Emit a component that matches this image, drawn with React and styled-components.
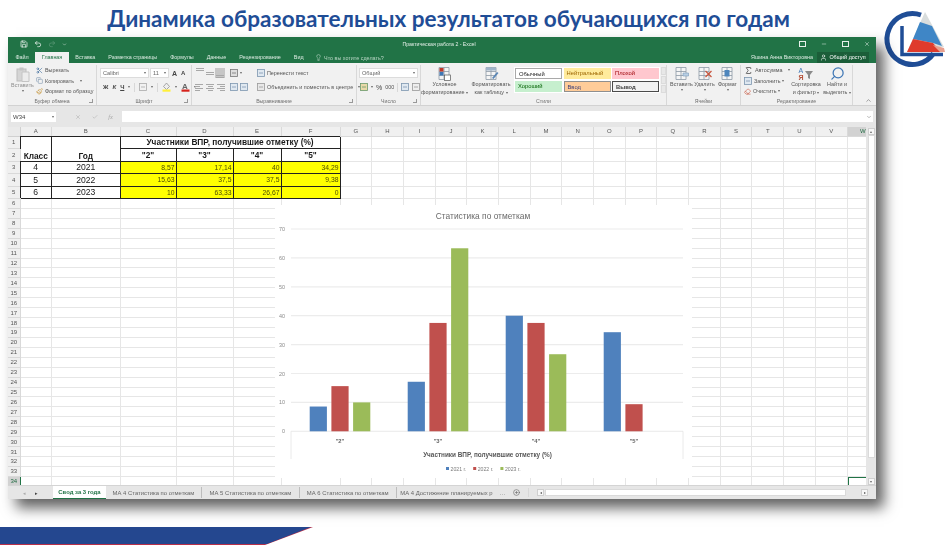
import React from 'react';
import styled, { createGlobalStyle } from 'styled-components';
import { Save, Undo2, Redo2, Scissors, Copy, Paintbrush, Lightbulb, X, Minus, User, Search, Sigma, Eraser, ChevronDown, ChevronUp, Check, CirclePlus } from 'lucide-react';

const sans = `'Liberation Sans', Arial, sans-serif`;

const GlobalStyle = createGlobalStyle`
  html, body { margin: 0; padding: 0; background: #fff; }
  body { font-family: ${sans}; }
`;

const Page = styled.div`
  position: relative;
  width: 950px;
  height: 545px;
  overflow: hidden;
  display: flex;
  flex-direction: column;
  background: #fff;
`;

const Title = styled.h1`
  margin: 0;
  height: 37px;
  width: 897px;
  text-align: center;
  font-family: Lato, 'Open Sans', sans-serif;
  font-size: 22.55px;
  line-height: 38px;
  font-weight: 700;
  color: #1f4d96;
  white-space: nowrap;
`;

const Logo = styled.svg`
  position: absolute;
  left: 875px;
  top: 4px;
  width: 75px;
  height: 75px;
`;

const Band = styled.div`
  margin-top: auto;
  width: 313px;
  height: 18px;
  background: #b8304a;
  clip-path: polygon(0 0, 100% 0, 265px 100%, 0 100%);
  &::before {
    content: '';
    display: block;
    height: 17px;
    background: #24478f;
    clip-path: polygon(0 0, 311px 0, 267px 100%, 0 100%);
  }
`;

const Window = styled.div`
  margin-left: 8px;
  width: 868px;
  height: 462px;
  display: flex;
  flex-direction: column;
  background: #f1f1f1;
  box-shadow: 8px 9px 13px rgba(0, 0, 0, 0.62);
  filter: blur(0.3px);
`;

/* title bar */
const TitleBar = styled.div`
  height: 14px;
  background: #217346;
  color: #e4efe8;
  display: grid;
  grid-template-columns: 1fr auto 1fr;
  align-items: center;
  padding: 0 12px 0 6px;
  font-size: 5.2px;
`;

const QuickAccess = styled.div`
  display: flex;
  align-items: center;
  gap: 6px;
  margin-left: 6px;
  color: #fff;
`;

const WinControls = styled.div`
  display: flex;
  justify-content: flex-end;
  align-items: center;
  gap: 15px;
  margin-right: -6px;
  color: #e6f0ea;
`;

const TinyRect = styled.span`
  display: block;
  width: 5px;
  height: 4px;
  border: 1px solid #e6f0ea;
`;

/* tab row */
const TabRow = styled.div`
  height: 12px;
  background: #217346;
  display: flex;
  align-items: flex-end;
  padding-left: 1px;
  font-size: 5.4px;
  color: #dcebe2;
`;

const Tab = styled.div`
  height: 11px;
  line-height: 11px;
  padding: 0 6.5px;
  background: ${(p) => (p.$active ? '#f1f1f1' : 'transparent')};
  color: ${(p) => (p.$active ? '#217346' : '#dcebe2')};
  white-space: nowrap;
`;

const TellMe = styled.div`
  height: 11px;
  display: flex;
  align-items: center;
  gap: 2px;
  margin-left: 5px;
  color: #b9d6c5;
`;

const UserArea = styled.div`
  margin-left: auto;
  height: 12px;
  display: flex;
  align-items: center;
  gap: 4px;
  padding-right: 7px;
`;

const ShareButton = styled.div`
  height: 11px;
  width: 52px;
  display: flex;
  align-items: center;
  justify-content: center;
  gap: 2px;
  background: #1b5e39;
  color: #fff;
`;

/* ribbon */
const Ribbon = styled.div`
  height: 43px;
  display: flex;
  background: #f1f1f1;
  border-bottom: 1px solid #d2d2d2;
  box-sizing: border-box;
  color: #555;
  font-size: 5.4px;
`;

const Group = styled.div`
  width: ${(p) => p.$w}px;
  flex: none;
  display: flex;
  flex-direction: column;
  margin: 2px 0 0;
  border-right: 1px solid #d8d8d8;
  box-sizing: border-box;
`;

const GroupBody = styled.div`
  flex: 1;
  min-height: 0;
  display: flex;
  gap: ${(p) => p.$gap || 0}px;
  padding: ${(p) => p.$pad || '0 2px'};
`;

const GroupLabel = styled.div`
  position: relative;
  height: 8px;
  line-height: 8px;
  text-align: center;
  font-size: 5.2px;
  color: #6f6f6f;
  &::after {
    content: '';
    display: ${(p) => (p.$launcher ? 'block' : 'none')};
    position: absolute;
    right: 3px;
    top: 2px;
    width: 3px;
    height: 3px;
    border: 1px solid #999;
    border-width: 0 1px 1px 0;
  }
`;

const Column = styled.div`
  display: flex;
  flex-direction: column;
  flex: none;
  width: ${(p) => (p.$w ? `${p.$w}px` : 'auto')};
  gap: ${(p) => p.$gap || 0}px;
`;

const Row = styled.div`
  display: flex;
  align-items: center;
  gap: ${(p) => p.$gap ?? 2}px;
  height: ${(p) => p.$h || 10}px;
  white-space: nowrap;
`;

const BigButton = styled.div`
  width: ${(p) => p.$w}px;
  flex: none;
  display: flex;
  flex-direction: column;
  align-items: center;
  line-height: 7.5px;
  text-align: center;
  white-space: nowrap;
  color: ${(p) => (p.$dim ? '#8d8d8d' : '#555')};
  svg { flex: none; }
`;

const Combo = styled.div`
  width: ${(p) => p.$w}px;
  height: 10px;
  box-sizing: border-box;
  background: #fff;
  border: 1px solid #dcdcdc;
  display: flex;
  align-items: center;
  justify-content: space-between;
  padding: 0 2px;
  font-size: 5.6px;
  color: #666;
  flex: none;
`;

const Caret = styled.span`
  display: inline-block;
  width: 0;
  height: 0;
  flex: none;
  border-left: 1.5px solid transparent;
  border-right: 1.5px solid transparent;
  border-top: 2px solid #666;
`;

const Letter = styled.span`
  font-family: ${(p) => (p.$serif ? `'Liberation Serif', serif` : sans)};
  font-weight: 700;
  font-size: ${(p) => p.$size || 7}px;
  font-style: ${(p) => (p.$italic ? 'italic' : 'normal')};
  text-decoration: ${(p) => (p.$under ? 'underline' : 'none')};
  color: ${(p) => p.$color || '#444'};
`;

const Divider = styled.span`
  display: block;
  width: 1px;
  height: 9px;
  background: #d8d8d8;
  flex: none;
`;

const AlignCell = styled.span`
  display: flex;
  flex-direction: column;
  justify-content: center;
  gap: 1px;
  width: 10px;
  height: 10px;
  background: ${(p) => (p.$on ? '#c6c6c6' : 'transparent')};
  align-items: ${(p) => p.$align || 'center'};
  flex: none;
  i {
    display: block;
    height: 1px;
    background: #a8a8a8;
  }
`;

const StyleGrid = styled.div`
  display: grid;
  grid-template-columns: repeat(3, 47px);
  grid-auto-rows: 11px;
  gap: 2px 1.5px;
  margin: 1px 0 0 0;
  background: #fff;
  padding: 1px;
  align-self: flex-start;
`;

const StyleCell = styled.div`
  background: ${(p) => p.$bg};
  color: ${(p) => p.$fg};
  border: ${(p) => p.$border || 'none'};
  box-sizing: border-box;
  font-size: 5.8px;
  font-weight: ${(p) => (p.$bold ? 700 : 400)};
  line-height: 10px;
  padding-left: 3px;
`;

const GalleryScroll = styled.div`
  width: 6px;
  margin: 1px 0 0 1px;
  height: 26px;
  display: grid;
  grid-template-rows: 1fr 1fr 1fr;
  gap: 1px;
  span { background: #e8e8e8; border: 1px solid #dcdcdc; box-sizing: border-box; }
`;

const Collapse = styled.div`
  flex: 1;
  display: flex;
  align-items: flex-end;
  justify-content: flex-end;
  padding: 0 4px 1px 0;
  color: #666;
`;

/* formula bar */
const FormulaBar = styled.div`
  height: 21px;
  flex: none;
  background: #e6e6e6;
  display: flex;
  align-items: center;
  padding: 0 3px;
  gap: 2px;
`;

const NameBox = styled(Combo)`
  width: 45px;
  height: 10px;
  border: none;
  color: #444;
  font-size: 6px;
`;

const FormulaButtons = styled.div`
  width: 62px;
  height: 10px;
  display: flex;
  align-items: center;
  justify-content: space-between;
  padding: 0 7px 0 17px;
  box-sizing: border-box;
  color: #aaa;
  font-style: italic;
  font-family: 'Liberation Serif', serif;
  font-size: 6.5px;
`;

const FormulaInput = styled.div`
  flex: 1;
  height: 11px;
  background: #fff;
  display: flex;
  align-items: center;
  justify-content: flex-end;
  padding-right: 1px;
  color: #777;
`;

/* sheet */
const SheetArea = styled.div`
  height: 358px;
  flex: none;
  display: flex;
  background: #fff;
`;

const SheetGrid = styled.div`
  position: relative;
  flex: 1;
  min-width: 0;
  overflow: hidden;
  display: grid;
  grid-template-columns: 12.5px 31.5px 68.5px 56px 57px 48px 59px repeat(17, 31.7px);
  grid-template-rows: 9.5px repeat(5, 12.5px) repeat(29, 9.93px);
`;

const Corner = styled.div`
  background: #eaeaea;
  border-right: 1px solid #d0d0d0;
  border-bottom: 1px solid #d0d0d0;
  box-sizing: border-box;
`;

const HeaderCell = styled.div`
  background: ${(p) => (p.$sel ? '#d2d2d2' : '#f0f0f0')};
  color: ${(p) => (p.$sel ? '#1f6b41' : '#555')};
  font-size: 6px;
  display: flex;
  align-items: center;
  justify-content: center;
  box-sizing: border-box;
  border-right: ${(p) => (p.$rowSel ? '1px solid #217346' : '1px solid #d9d9d9')};
  border-bottom: 1px solid #d9d9d9;
`;

const Cell = styled.div`
  box-sizing: border-box;
  border-right: 1px solid ${(p) => (p.$boxed ? '#222' : '#e6e6e6')};
  border-bottom: 1px solid ${(p) => (p.$boxed ? '#222' : '#e6e6e6')};
  box-shadow: ${(p) => (p.$boxed ? '-1px -1px 0 #222' : 'none')};
  background: ${(p) => (p.$yellow ? '#ffff00' : '#fff')};
  grid-column: span ${(p) => p.$cols || 1};
  grid-row: span ${(p) => p.$rows || 1};
  display: flex;
  align-items: ${(p) => (p.$rows ? 'flex-end' : 'center')};
  justify-content: ${(p) => (p.$yellow ? 'flex-end' : 'center')};
  padding-right: ${(p) => (p.$yellow ? 1 : 0)}px;
  font-size: ${(p) => (p.$yellow ? 6.8 : p.$bold ? 8.3 : 8.6)}px;
  font-weight: ${(p) => (p.$bold ? 700 : 400)};
  color: ${(p) => (p.$yellow ? '#4d4d00' : '#1a1a1a')};
  white-space: nowrap;
`;

const SelectedCell = styled(Cell)`
  border: 0;
  border-top: 1px solid #217346;
  border-left: 1px solid #217346;
`;

const ChartBox = styled.div`
  position: absolute;
  left: 267px;
  top: 78px;
  width: 417px;
  height: 273px;
  background: #fff;
`;

const VScroll = styled.div`
  width: 10px;
  flex: none;
  background: #e6e6e6;
  display: flex;
  flex-direction: column;
  align-items: center;
  padding-top: 1px;
  box-sizing: border-box;
`;

const VThumb = styled.div`
  width: 7px;
  height: 323px;
  background: #fff;
  border: 1px solid #dadada;
  box-sizing: border-box;
`;

const ScrollButton = styled.div`
  width: 7px;
  height: 7px;
  background: #f7f7f7;
  border: 1px solid #cfcfcf;
  box-sizing: border-box;
  display: flex;
  align-items: center;
  justify-content: center;
  flex: none;
  font-size: 4px;
  color: #555;
  margin-top: ${(p) => (p.$bottom ? 'auto' : 0)};
`;

/* sheet tabs */
const SheetBar = styled.div`
  flex: 1;
  background: #e6e6e6;
  border-top: 1px solid #d4d4d4;
  display: flex;
  align-items: stretch;
  font-size: 5.9px;
  color: #666;
  min-height: 0;
`;

const SheetNav = styled.div`
  width: 45px;
  flex: none;
  display: flex;
  align-items: center;
  justify-content: flex-end;
  gap: 9px;
  padding-right: 15px;
  box-sizing: border-box;
  color: #444;
  font-size: 5px;
`;

const SheetTab = styled.div`
  width: ${(p) => p.$w}px;
  flex: none;
  box-sizing: border-box;
  overflow: hidden;
  text-align: center;
  line-height: 13px;
  white-space: nowrap;
  background: ${(p) => (p.$active ? '#fff' : 'transparent')};
  color: ${(p) => (p.$active ? '#217346' : '#666')};
  font-weight: ${(p) => (p.$active ? 700 : 400)};
  border-bottom: ${(p) => (p.$active ? '1px solid #217346' : 'none')};
  border-right: ${(p) => (p.$last || p.$active ? 'none' : '1px solid #bdbdbd')};
  margin: ${(p) => (p.$active ? 0 : '1px 0')};
`;

const HScrollArea = styled.div`
  flex: 1;
  display: flex;
  align-items: center;
  gap: 1px;
  margin-left: 2.5px;
  padding-right: 8px;
`;

const HThumb = styled.div`
  flex: 1;
  height: 7px;
  background: #fff;
  border: 1px solid #dadada;
  box-sizing: border-box;
  margin-right: 14px;
`;

const MoreTabs = styled.div`
  width: 38px;
  flex: none;
  display: flex;
  align-items: center;
  gap: 8px;
  padding-left: 3px;
  box-sizing: border-box;
  color: #666;
`;

// ---------- small drawings ----------

const PasteIcon = () => (
  <svg width="14" height="15" viewBox="0 0 14 15">
    <rect x="1" y="2" width="9" height="12" fill="#d5d5d5" stroke="#bdbdbd" />
    <rect x="3.5" y="0.5" width="4" height="3" fill="#c4c4c4" />
    <path d="M6 5h7v9.5H6z" fill="#ececec" stroke="#c4c4c4" />
  </svg>
);

const GridIcon = ({ accent, w = 15 }) => (
  <svg width={w} height="15" viewBox="0 0 15 15" preserveAspectRatio="xMinYMid meet">
    <path d="M2 1.5h10v12H2zM2 5.5h10M2 9.5h10M7 1.5v12" fill="#f5f5f5" stroke="#8d99a6" strokeWidth="0.8" />
    {accent}
  </svg>
);

const CondIcon = () => (
  <GridIcon
    accent={
      <>
        <rect x="2.5" y="2" width="4" height="3.5" fill="#c0392b" />
        <rect x="2.5" y="6" width="4" height="3.5" fill="#3f77b5" />
        <rect x="7.5" y="9" width="6" height="5.5" fill="#fff" stroke="#555" strokeWidth="0.7" />
      </>
    }
  />
);

const TableIcon = () => (
  <GridIcon
    accent={
      <>
        <rect x="2" y="1.5" width="10" height="3" fill="#9fb4c9" />
        <path d="M8 12l5-6 1.5 1-5 6z" fill="#5b86b5" />
      </>
    }
  />
);

const InsertIcon = () => (
  <GridIcon accent={<path d="M9 7h5.5v3H9z" fill="#b9cfe4" stroke="#7a9ab8" strokeWidth="0.6" />} />
);

const DeleteIcon = () => (
  <GridIcon accent={<path d="M8.5 5l6 6M14.5 5l-6 6" stroke="#c8553d" strokeWidth="1.2" />} />
);

const FormatIcon = () => (
  <GridIcon accent={<rect x="4.5" y="4" width="5" height="6.5" fill="#4e86bd" />} />
);

const SortIcon = () => (
  <svg width="16" height="15" viewBox="0 0 16 15">
    <text x="0.5" y="6.5" fontSize="7" fill="#3f77b5" fontFamily={sans}>А</text>
    <text x="0.5" y="14" fontSize="7" fontWeight="700" fill="#b5533c" fontFamily={sans}>Я</text>
    <path d="M7 5h8l-3 4v4l-2-1V9z" fill="#8a8a8a" />
  </svg>
);

const SmallGlyph = ({ color = '#7d96b0', fill = '#dfe8f0' }) => (
  <svg width="8" height="8" viewBox="0 0 8 8">
    <rect x="0.5" y="0.5" width="7" height="7" fill={fill} stroke={color} strokeWidth="0.8" />
    <path d="M2 4h4" stroke={color} strokeWidth="0.8" />
  </svg>
);

const AlignLines = ({ align }) => (
  <AlignCell $align={align}>
    <i style={{ width: 8 }} />
    <i style={{ width: 5 }} />
    <i style={{ width: 8 }} />
    <i style={{ width: 5 }} />
  </AlignCell>
);

const VertLines = ({ on, pos }) => (
  <AlignCell $on={on} style={{ justifyContent: pos }}>
    <i style={{ width: 8 }} />
    <i style={{ width: 8 }} />
  </AlignCell>
);

const FillIcon = ({ color, letter }) => (
  <svg width="9" height="10" viewBox="0 0 9 10">
    {letter ? (
      <text x="1" y="7" fontSize="8" fontWeight="700" fill="#666" fontFamily={sans}>A</text>
    ) : (
      <path d="M4.5 1l3 3.5-3 3-3-3z" fill="#eee" stroke="#888" strokeWidth="0.7" />
    )}
    <rect x="0.5" y="7.5" width="8" height="2.2" fill={color} />
  </svg>
);

// ---------- ribbon ----------

const RibbonBar = () => (
  <Ribbon>
    <Group $w={89}>
      <GroupBody $pad="0 0 0 3px" $gap={2}>
        <BigButton $w={23} $dim style={{ paddingTop: 2 }}>
          <PasteIcon />
          Вставить
          <Caret />
        </BigButton>
        <Column>
          <Row $h={10.5}><Scissors size={7} color="#3f6f9f" />Вырезать</Row>
          <Row $h={10.5}><Copy size={7} color="#7d96b0" />Копировать <Caret style={{ marginLeft: 4 }} /></Row>
          <Row $h={10.5}><Paintbrush size={7} color="#c7963d" />Формат по образцу</Row>
        </Column>
      </GroupBody>
      <GroupLabel $launcher>Буфер обмена</GroupLabel>
    </Group>
    <Group $w={95}>
      <GroupBody $pad="3px 0 0 3px">
        <Column $gap={4}>
          <Row $gap={1}>
            <Combo $w={49}>Calibri<Caret /></Combo>
            <Combo $w={19}>11<Caret /></Combo>
            <Letter $size={7} style={{ marginLeft: 2 }}>A</Letter>
            <Letter $size={6} style={{ marginLeft: 3 }}>A</Letter>
          </Row>
          <Row $gap={4} style={{ paddingLeft: 3 }}>
            <Letter $size={6}>Ж</Letter>
            <Letter $size={6} $italic>К</Letter>
            <Letter $size={6} $under>Ч</Letter>
            <Caret />
            <Divider />
            <SmallGlyph color="#aaa" fill="#f1f1f1" />
            <Caret />
            <Divider />
            <FillIcon color="#ffef3a" />
            <Caret />
            <FillIcon letter color="#d6231c" />
            <Caret />
          </Row>
        </Column>
      </GroupBody>
      <GroupLabel $launcher>Шрифт</GroupLabel>
    </Group>
    <Group $w={165}>
      <GroupBody $pad="3px 0 0 3px" $gap={5}>
        <Column $gap={4}>
          <Row $gap={0}>
            <VertLines pos="flex-start" />
            <VertLines pos="center" />
            <VertLines on pos="flex-end" />
          </Row>
          <Row $gap={0}>
            <AlignLines align="flex-start" />
            <AlignLines />
            <AlignLines align="flex-end" />
          </Row>
        </Column>
        <Column $gap={4} style={{ width: 22 }}>
          <Row $gap={2}><SmallGlyph color="#777" fill="#ddd" /><Caret /></Row>
          <Row $gap={2}><SmallGlyph /><SmallGlyph /></Row>
        </Column>
        <Column $gap={4}>
          <Row $gap={2}><SmallGlyph />Перенести текст</Row>
          <Row $gap={2}><SmallGlyph color="#999" fill="#e8e8e8" />Объединить и поместить в центре <Caret style={{ marginLeft: 3 }} /></Row>
        </Column>
      </GroupBody>
      <GroupLabel $launcher>Выравнивание</GroupLabel>
    </Group>
    <Group $w={64}>
      <GroupBody $pad="3px 0 0 2px">
        <Column $gap={4}>
          <Combo $w={59}>Общий<Caret /></Combo>
          <Row $gap={3} style={{ paddingLeft: 1 }}>
            <SmallGlyph color="#6a9a6a" fill="#e8d9a8" /><Caret />
            <Letter $size={7} style={{ fontWeight: 400 }}>%</Letter>
            <span>000</span>
            <Divider />
            <SmallGlyph /><SmallGlyph color="#999" fill="#eee" />
          </Row>
        </Column>
      </GroupBody>
      <GroupLabel $launcher>Число</GroupLabel>
    </Group>
    <Group $w={246}>
      <GroupBody $pad="1px 0 0 0">
        <BigButton $w={47}>
          <CondIcon />
          Условное
          <span>форматирование <Caret /></span>
        </BigButton>
        <BigButton $w={46}>
          <TableIcon />
          Форматировать
          <span>как таблицу <Caret /></span>
        </BigButton>
        <StyleGrid>
          <StyleCell $bg="#fff" $fg="#222" $border="1px solid #a9a9a9">Обычный</StyleCell>
          <StyleCell $bg="#ffeb9c" $fg="#9c6500">Нейтральный</StyleCell>
          <StyleCell $bg="#ffc7ce" $fg="#9c0006">Плохой</StyleCell>
          <StyleCell $bg="#c6efce" $fg="#006100">Хороший</StyleCell>
          <StyleCell $bg="#ffcc99" $fg="#3f3f76" $border="1px solid #8f8f8f">Ввод</StyleCell>
          <StyleCell $bg="#f2f2f2" $fg="#3f3f3f" $border="1px solid #4a4a4a" $bold>Вывод</StyleCell>
        </StyleGrid>
        <GalleryScroll><span /><span /><span /></GalleryScroll>
      </GroupBody>
      <GroupLabel>Стили</GroupLabel>
    </Group>
    <Group $w={74}>
      <GroupBody $pad="1px 0 0 3px">
        <BigButton $w={23}><InsertIcon />Вставить<Caret /></BigButton>
        <BigButton $w={23}><DeleteIcon />Удалить<Caret /></BigButton>
        <BigButton $w={23}><FormatIcon />Формат<Caret /></BigButton>
      </GroupBody>
      <GroupLabel>Ячейки</GroupLabel>
    </Group>
    <Group $w={112}>
      <GroupBody $pad="0 0 0 3px">
        <Column $w={47}>
          <Row $h={10.5}><Sigma size={9} color="#444" />Автосумма <Caret style={{ marginLeft: 3 }} /></Row>
          <Row $h={10.5}><SmallGlyph />Заполнить <Caret /></Row>
          <Row $h={10.5}><Eraser size={7} color="#c8553d" />Очистить <Caret /></Row>
        </Column>
        <BigButton $w={30} style={{ paddingTop: 1 }}>
          <SortIcon />
          Сортировка
          <span>и фильтр <Caret /></span>
        </BigButton>
        <BigButton $w={32} style={{ paddingTop: 1 }}>
          <Search size={15} color="#3f77b5" style={{ transform: 'scaleX(-1)' }} />
          Найти и
          <span>выделить <Caret /></span>
        </BigButton>
      </GroupBody>
      <GroupLabel>Редактирование</GroupLabel>
    </Group>
    <Collapse><ChevronUp size={7} /></Collapse>
  </Ribbon>
);

// ---------- sheet ----------

const columns = 'ABCDEFGHIJKLMNOPQRSTUVW'.split('');
const scores = [
  ['8,57', '17,14', '40', '34,29'],
  ['15,63', '37,5', '37,5', '9,38'],
  ['10', '63,33', '26,67', '0'],
];
const classes = [['4', '2021'], ['5', '2022'], ['6', '2023']];

const renderRow = (r) => {
  const cells = [];
  if (r === 1) {
    cells.push(<Cell key="a" $boxed $bold $rows={2}>Класс</Cell>);
    cells.push(<Cell key="b" $boxed $bold $rows={2}>Год</Cell>);
    cells.push(<Cell key="c" $boxed $bold $cols={4}>Участники ВПР, получившие отметку (%)</Cell>);
  } else if (r === 2) {
    ['"2"', '"3"', '"4"', '"5"'].forEach((t) => cells.push(<Cell key={t} $boxed $bold>{t}</Cell>));
  } else if (r <= 5) {
    classes[r - 3].forEach((t) => cells.push(<Cell key={t} $boxed>{t}</Cell>));
    scores[r - 3].forEach((t, i) => cells.push(<Cell key={i} $boxed $yellow>{t}</Cell>));
  }
  const start = r <= 5 ? 6 : 0;
  for (let i = start; i < columns.length; i += 1) {
    if (r === 34 && i === 22) cells.push(<SelectedCell key={i} />);
    else cells.push(<Cell key={i} />);
  }
  return cells;
};

const rowNumbers = Array.from({ length: 34 }, (_, i) => i + 1);

const groups = [
  { label: '"2"', values: [8.57, 15.63, 10] },
  { label: '"3"', values: [17.14, 37.5, 63.33] },
  { label: '"4"', values: [40, 37.5, 26.67] },
  { label: '"5"', values: [34.29, 9.38, 0] },
];
const seriesColors = ['#4f81bd', '#c0504d', '#9bbb59'];
const zeroY = 431.3;
const unit = 2.89;

const Chart = () => (
  <ChartBox>
    <svg width="417" height="273" viewBox="275 205 417 273" fontFamily={sans}>
      <text x="483" y="219" fontSize="8.4" fill="#6b6b6b" textAnchor="middle">Статистика по отметкам</text>
      {[10, 20, 30, 40, 50, 60, 70].map((v) => (
        <line key={v} x1="291" x2="683" y1={zeroY - v * unit} y2={zeroY - v * unit} stroke="#ececec" strokeWidth="1.2" />
      ))}
      {[0, 10, 20, 30, 40, 50, 60, 70].map((v) => (
        <text key={v} x="285" y={zeroY - v * unit + 2} fontSize="5.4" fill="#8a8a8a" textAnchor="end">{v}</text>
      ))}
      <path d="M291 459V431.3H683V459" fill="none" stroke="#e4e4e4" strokeWidth="0.8" />
      {groups.map((g, i) =>
        g.values.map((v, j) => (
          <rect
            key={`${i}-${j}`}
            x={309.7 + 98 * i + 21.7 * j}
            y={zeroY - v * unit}
            width="17.2"
            height={v * unit}
            fill={seriesColors[j]}
          />
        ))
      )}
      {groups.map((g, i) => (
        <text key={g.label} x={340 + 98 * i} y="442.5" fontSize="5.8" fontWeight="700" fill="#666" textAnchor="middle">{g.label}</text>
      ))}
      <text x="487.5" y="457" fontSize="6.4" fontWeight="700" fill="#595959" textAnchor="middle">Участники ВПР, получившие отметку (%)</text>
      {['2021 г.', '2022 г.', '2023 г.'].map((t, i) => (
        <g key={t}>
          <rect x={446 + 27.2 * i} y="467" width="3" height="3" fill={seriesColors[i]} />
          <text x={450.5 + 27.2 * i} y="470.5" fontSize="5.2" fill="#7a7a7a">{t}</text>
        </g>
      ))}
    </svg>
  </ChartBox>
);

const Sheet = () => (
  <SheetArea>
    <SheetGrid>
      <Corner />
      {columns.map((c) => <HeaderCell key={c} $sel={c === 'W'}>{c}</HeaderCell>)}
      {rowNumbers.map((r) => (
        <React.Fragment key={r}>
          <HeaderCell $sel={r === 34} $rowSel={r === 34}>{r}</HeaderCell>
          {renderRow(r)}
        </React.Fragment>
      ))}
      <Chart />
    </SheetGrid>
    <VScroll>
      <ScrollButton><Caret style={{ transform: 'rotate(180deg)' }} /></ScrollButton>
      <VThumb />
      <ScrollButton $bottom><Caret /></ScrollButton>
    </VScroll>
  </SheetArea>
);

const tabs = [
  { name: 'Свод за 3 года', w: 53, active: true },
  { name: 'МА 4 Статистика по отметкам', w: 96 },
  { name: 'МА 5 Статистика по отметкам', w: 98 },
  { name: 'МА 6 Статистика по отметкам', w: 96.5 },
  { name: 'МА 4 Достижение планируемых р', w: 100, last: true },
];

const SheetTabs = () => (
  <SheetBar>
    <SheetNav><span style={{ color: '#aaa' }}>◂</span><span>▸</span></SheetNav>
    {tabs.map((t) => (
      <SheetTab key={t.name} $w={t.w} $active={t.active} $last={t.last}>{t.name}</SheetTab>
    ))}
    <MoreTabs>…<CirclePlus size={7} /><Divider /></MoreTabs>
    <HScrollArea>
      <ScrollButton>◂</ScrollButton>
      <HThumb />
      <ScrollButton>▸</ScrollButton>
    </HScrollArea>
  </SheetBar>
);

export default function App() {
  return (
    <Page>
      <GlobalStyle />
      <Title>Динамика образовательных результатов обучающихся по годам</Title>
      <Logo viewBox="0 0 75 75">
        <path d="M46 11 A25.5 25.5 0 1 0 58.5 49.5" fill="none" stroke="#1f4d96" strokeWidth="5" />
        <path d="M50 8 L69 43 L32 48 Z" fill="#d9dddd" />
        <path d="M45 18 L57 22 L67 42 L58 39 L38 35 Z" fill="#3f86c6" />
        <path d="M38 35 L58 39 L66 48 L32 48 Z" fill="#df3b2c" />
        <path d="M58 41 L69 44 L70 48 L65 48 Z" fill="#e9a08f" />
        <path d="M27 22 V50.5 H68" fill="none" stroke="#1f4d96" strokeWidth="3.5" />
      </Logo>
      <Window>
        <TitleBar>
          <QuickAccess>
            <Save size={8} />
            <Undo2 size={8} />
            <Redo2 size={8} color="#5f9a7a" />
            <ChevronDown size={5} />
          </QuickAccess>
          <span>Практическая работа 2 - Excel</span>
          <WinControls>
            <TinyRect />
            <Minus size={6} />
            <TinyRect />
            <X size={6} />
          </WinControls>
        </TitleBar>
        <TabRow>
          {['Файл', 'Главная', 'Вставка', 'Разметка страницы', 'Формулы', 'Данные', 'Рецензирование', 'Вид'].map((t) => (
            <Tab key={t} $active={t === 'Главная'}>{t}</Tab>
          ))}
          <TellMe><Lightbulb size={7} />Что вы хотите сделать?</TellMe>
          <UserArea>
            <span>Яшина Анна Викторовна</span>
            <ShareButton><User size={7} />Общий доступ</ShareButton>
          </UserArea>
        </TabRow>
        <RibbonBar />
        <FormulaBar>
          <NameBox>W34<Caret /></NameBox>
          <FormulaButtons><X size={6} /><Check size={6} /><span>fx</span></FormulaButtons>
          <FormulaInput><ChevronDown size={6} /></FormulaInput>
        </FormulaBar>
        <Sheet />
        <SheetTabs />
      </Window>
      <Band />
    </Page>
  );
}
